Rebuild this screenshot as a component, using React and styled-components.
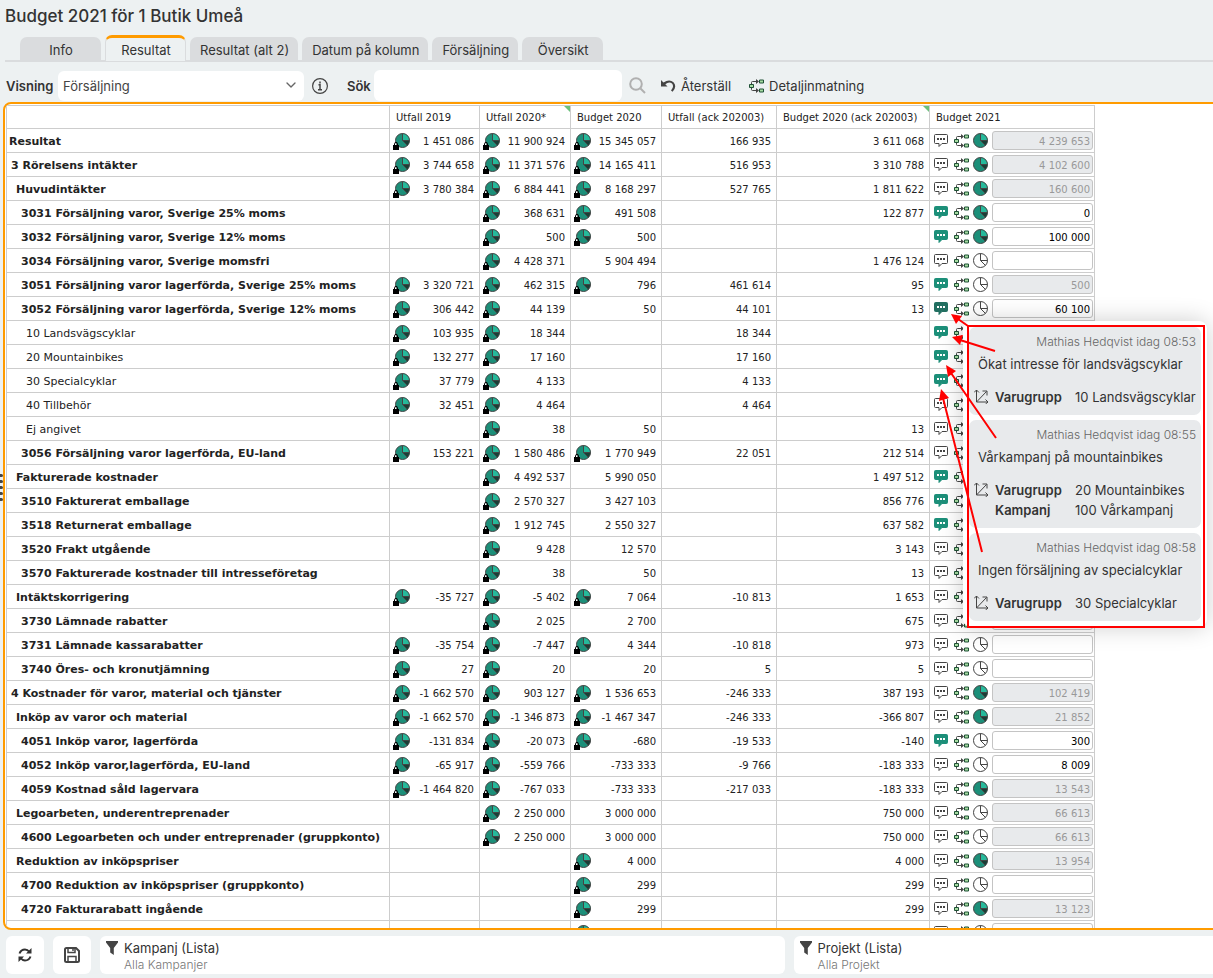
import styled, { createGlobalStyle, css } from 'styled-components'
import { ChevronDown } from 'lucide-react'

const colors = {
  page: '#edf1f2',
  orange: '#ff9b00',
  tab: '#dadcde',
  line: '#cdcdcd',
  text: '#333333',
  muted: '#777777',
  card: '#e8eaec',
  green: '#1c8f79',
}

const ui = '"Inter", "Liberation Sans", sans-serif'
const data = '"DejaVu Sans", Verdana, sans-serif'

const GlobalStyle = createGlobalStyle`
  * { box-sizing: border-box; }
  body {
    margin: 0;
    background: ${colors.page};
    color: ${colors.text};
    font: 13px/20px ${ui};
    overflow: hidden;
  }
`

const Page = styled.div`
  position: relative;
  display: flex;
  flex-direction: column;
  height: 100vh;
  overflow: hidden;
`

const Title = styled.h1`
  margin: 0;
  padding: 4px 5px 7px;
  font-size: 17px;
  line-height: 24px;
  font-weight: 500;
`

const Tabs = styled.nav`
  display: flex;
  align-items: flex-end;
  gap: 4px;
  height: 27px;
  margin-left: 5px;
  padding-left: 15px;
  border-bottom: 2px solid ${colors.tab};
`

const Tab = styled.a`
  height: 23px;
  min-width: 81px;
  padding: 2px 9px 0 10px;
  border-radius: 7px 7px 0 0;
  background: ${colors.tab};
  color: ${colors.text};
  text-align: center;
  text-decoration: none;
  line-height: 22px;
  ${p => p.$active && css`
    height: 27px;
    margin-bottom: -2px;
    padding-top: 1px;
    border: 1px solid ${colors.tab};
    border-top: 3px solid ${colors.orange};
    background: ${colors.page};
  `}
`

const Toolbar = styled.div`
  display: flex;
  align-items: center;
  height: 40px;
  padding: 7px 6px 0;
`

const FieldLabel = styled.label`
  font-weight: 600;
  width: ${p => p.$width}px;
`

const SelectBox = styled.div`
  position: relative;
  width: 246px;
  margin-right: 8px;
  svg {
    position: absolute;
    right: 5px;
    top: 6px;
    pointer-events: none;
  }
`

const Select = styled.select`
  appearance: none;
  width: 100%;
  height: 30px;
  padding: 0 5px;
  border: 0;
  border-radius: 6px;
  background: white;
  color: #444;
  font: inherit;
`

const SearchInput = styled.input`
  width: 248px;
  height: 31px;
  margin-right: 7px;
  border: 0;
  border-radius: 6px;
  background: white;
  font: inherit;
`

const PlainButton = styled.button`
  display: flex;
  align-items: center;
  gap: 5px;
  padding: 0;
  border: 0;
  background: none;
  color: inherit;
  font: inherit;
  margin-right: ${p => p.$gap || 0}px;
`

const Panel = styled.main`
  flex: 1;
  min-height: 0;
  margin: 0 -8px 0 3px;
  padding: 1px;
  border: 2px solid ${colors.orange};
  border-radius: 8px;
  background: white;
  overflow: hidden;
`

const Table = styled.table`
  width: 1089px;
  table-layout: fixed;
  border-collapse: separate;
  border-spacing: 0;
  border-top: 1px solid ${colors.line};
  border-left: 1px solid ${colors.line};
  font: 10px/20px ${data};
  color: #222;
`

const Head = styled.th`
  position: relative;
  width: ${p => p.$width}px;
  height: 23px;
  padding: 2px 6px 0;
  border: solid ${colors.line};
  border-width: 0 1px 1px 0;
  font-weight: 400;
  text-align: left;
  white-space: nowrap;
  ${p => p.$marked && css`
    &::after {
      content: '';
      position: absolute;
      top: 0;
      right: 0;
      border: 3px solid transparent;
      border-top-color: #6cc07c;
      border-right-color: #6cc07c;
    }
  `}
`

const Name = styled.th`
  height: 24px;
  padding: 3px 2px 0 ${p => p.$indent}px;
  border: solid ${colors.line};
  border-width: 0 1px 1px 0;
  font-size: 11px;
  font-weight: ${p => (p.$bold ? 700 : 400)};
  text-align: left;
  white-space: nowrap;
`

const Cell = styled.td`
  height: 24px;
  padding: 0 ${p => (p.$edit ? 1 : 5)}px 0 ${p => (p.$edit ? 4 : 3)}px;
  border: solid ${colors.line};
  border-width: 0 1px 1px 0;
`

const Value = styled.div`
  display: flex;
  align-items: center;
  justify-content: space-between;
  height: 23px;
  span { margin-left: auto; padding-top: 2px; }
`

const EditLine = styled.div`
  display: flex;
  align-items: center;
  gap: 4px;
  height: 23px;
`

const Amount = styled.input`
  flex: 1;
  min-width: 0;
  height: 19px;
  padding: 2px 2px 0;
  border: 1px solid #c4c4c4;
  border-radius: 3px;
  background: white;
  color: black;
  font: 10px/16px ${data};
  text-align: right;
  &:disabled {
    background: ${colors.card};
    color: #999;
  }
`

const Footer = styled.footer`
  display: flex;
  gap: 9px;
  padding: 6px 6px 4px;
`

const SquareButton = styled.button`
  display: flex;
  align-items: center;
  justify-content: center;
  flex: none;
  width: 38px;
  height: 38px;
  padding: 0;
  border: 0;
  border-radius: 6px;
  background: white;
`

const Filter = styled.button`
  display: flex;
  gap: 6px;
  flex: 0 0 57%;
  height: 38px;
  padding: 3px 6px;
  border: 0;
  border-radius: 6px;
  background: white;
  color: ${colors.text};
  font: 13px/18px ${ui};
  text-align: left;
  svg { margin-top: 2px; }
  small {
    display: block;
    font-size: 12px;
    line-height: 15px;
    font-weight: 300;
    color: ${colors.muted};
  }
`

const Handle = styled.div`
  position: absolute;
  left: -2px;
  top: 474px;
  display: grid;
  gap: 3px;
  i {
    width: 5px;
    height: 3px;
    border-radius: 2px;
    background: #444;
  }
`

const Popover = styled.aside`
  position: absolute;
  left: 963px;
  top: 321px;
  width: 244px;
  display: grid;
  gap: 5px;
  padding: 6px;
  border-radius: 8px;
  background: white;
  box-shadow: 0 0 24px rgba(0, 0, 0, 0.2);
`

const Card = styled.article`
  padding: 5px 5px 8px;
  border-radius: 7px;
  background: ${colors.card};
`

const Author = styled.div`
  font-size: 12px;
  font-weight: 300;
  color: #666;
  text-align: right;
`

const Message = styled.p`
  margin: 2px 4px 13px;
  white-space: nowrap;
`

const Dimensions = styled.dl`
  display: grid;
  grid-template-columns: 21px 80px 1fr;
  margin: 0;
  svg { margin-top: 2px; }
  dt { grid-column: 2; font-weight: 600; }
  dd { margin: 0; white-space: nowrap; }
`

const Markup = styled.svg`
  position: absolute;
  left: 930px;
  top: 305px;
  pointer-events: none;
`

const Pie = ({ filled, locked }) => (
  <svg width={locked ? 18 : 15} height={locked ? 18 : 15} viewBox={locked ? '-2 -1 18 18' : '0 0 15 15'}>
    <circle cx="7.5" cy="7.5" r="7" fill={filled ? colors.green : '#fff'} />
    {filled && <path d="M7.5 7.5V.5a7 7 0 0 1 7 7z" fill="#26b99b" />}
    {filled && <path d="M7.5 7.5h7a7 7 0 0 1-2 5z" fill="#173f36" />}
    <path d="M7.5 .5V7.5H14.5M7.5 7.5L12.5 12.5" fill="none" stroke="#444" />
    <circle cx="7.5" cy="7.5" r="7" fill="none" stroke="#444" />
    {locked && <path d="M-2 12h6v5h-6z" />}
    {locked && <path d="M-.5 12.5v-2q0-1 1.5-1t1.5 1v2" fill="none" stroke="#000" />}
  </svg>
)

const Comment = ({ state }) => {
  const fill = { on: colors.green, hover: '#226f61' }[state]
  return (
    <svg width="14" height="13" viewBox="0 0 14 13">
      <path
        d="M1.5.5h11q1 0 1 1v7q0 1-1 1H8L5 12.500V9.500H1.500q-1 0-1-1v-7q0-1 1-1z"
        fill={fill || '#fff'}
        stroke={fill || '#444'}
      />
      <path d="M3 4h2v2H3zM6 4h2v2H6zM9 4h2v2H9z" fill={fill ? '#fff' : '#444'} />
    </svg>
  )
}

const Flow = () => (
  <svg width="15" height="14" viewBox="0 0 15 14">
    <path d="M2.5 5V3.5q0-1 1-1H8M2.500 9v1.500q0 1 1 1H8" fill="none" stroke="#444" />
    <path d="M7 0v5l3-2.500zM7 9v5l3-2.500z" fill="#444" />
    <path d="M.5 5.500h4v3h-4zM10.500 1h4v3h-4zM10.500 10h4v3h-4z" fill="#a5dba0" stroke="#1f5136" />
  </svg>
)

const Axes = () => (
  <svg width="15" height="15" viewBox="0 0 15 15" fill="none" stroke="#444">
    <path d="M2.500 1v12H14M0 3.500L2.500 1 5 3.500M11.500 10.500L14 13l-2.500 2M2.500 13L12.500 2.500M8.500 2h4.500v4.500" />
  </svg>
)

const Info = () => (
  <svg width="16" height="16" viewBox="0 0 16 16" fill="none" stroke="#444">
    <circle cx="8" cy="8" r="7.400" strokeWidth="1.200" />
    <path d="M8 3.500v2M6.500 6.800H8v4.700M6 11.700h4" strokeWidth="1.500" />
  </svg>
)

const SearchIcon = () => (
  <svg width="17" height="17" viewBox="0 0 17 17" fill="none" stroke="#b0b0b0" strokeWidth="2">
    <circle cx="7" cy="7" r="5.800" />
    <path d="M11.500 11.500L16 16" />
  </svg>
)

const Undo = () => (
  <svg width="15" height="13" viewBox="0 0 15 13">
    <path d="M0 1v6.500h6.500L4.300 5.300Q8 2 11 4.500q2.500 3-1 7l1.600 1.300q4.800-5.300.9-9.500Q8.500-.5 2.500 3.500z" fill="#444" />
  </svg>
)

const Refresh = () => (
  <svg width="14" height="14" viewBox="0 0 14 14" fill="none" stroke="#333" strokeWidth="2">
    <path d="M1.500 5.500Q3 1.500 7 1.500q2.500 0 4.500 2.500M12.500 8.500Q11 12.500 7 12.500q-2.500 0-4.500-2.500" />
    <path d="M13.500 0v5.500H8zM.5 14V8.500H6z" fill="#333" stroke="none" />
  </svg>
)

const Save = () => (
  <svg width="16" height="16" viewBox="0 0 16 16" fill="none" stroke="#444" strokeWidth="2">
    <path d="M2.500 1h9.500l3 3v9.500q0 1.500-1.500 1.500h-11Q1 15 1 13.500v-11Q1 1 2.500 1z" />
    <path d="M4 1v4.500h7V1M4 15V9.500h8V15M9 2v2" strokeWidth="1.500" />
  </svg>
)

const Funnel = () => (
  <svg width="12" height="14" viewBox="0 0 12 14">
    <path d="M0 0h12v1.500L7.800 7v7L4.200 11.500V7L0 1.500z" fill="#444" />
  </svg>
)

const tabs = ['Info', 'Resultat', 'Resultat (alt 2)', 'Datum på kolumn', 'Försäljning', 'Översikt']

const columns = [
  { name: '', width: 383 },
  { name: 'Utfall 2019', width: 90 },
  { name: 'Utfall 2020*', width: 91, marked: true },
  { name: 'Budget 2020', width: 91 },
  { name: 'Utfall (ack 202003)', width: 115 },
  { name: 'Budget 2020 (ack 202003)', width: 153, marked: true },
  { name: 'Budget 2021', width: 165 },
]

// level, name, values (* = locked pie), comment, pie filled, amount, editable
const rows = [
  [0, 'Resultat', ['*1 451 086', '*11 900 924', '*15 345 057', '166 935', '3 611 068'], '', 1, '4 239 653', 0],
  [1, '3 Rörelsens intäkter', ['*3 744 658', '*11 371 576', '*14 165 411', '516 953', '3 310 788'], '', 1, '4 102 600', 0],
  [2, 'Huvudintäkter', ['*3 780 384', '*6 884 441', '*8 168 297', '527 765', '1 811 622'], '', 1, '160 600', 0],
  [3, '3031 Försäljning varor, Sverige 25% moms', ['', '*368 631', '*491 508', '', '122 877'], 'on', 1, '0', 1],
  [3, '3032 Försäljning varor, Sverige 12% moms', ['', '*500', '*500', '', ''], 'on', 1, '100 000', 1],
  [3, '3034 Försäljning varor, Sverige momsfri', ['', '*4 428 371', '5 904 494', '', '1 476 124'], '', 0, '', 1],
  [3, '3051 Försäljning varor lagerförda, Sverige 25% moms', ['*3 320 721', '*462 315', '*796', '461 614', '95'], 'on', 0, '500', 0],
  [3, '3052 Försäljning varor lagerförda, Sverige 12% moms', ['*306 442', '*44 139', '50', '44 101', '13'], 'hover', 0, '60 100', 1],
  [4, '10 Landsvägscyklar', ['*103 935', '*18 344', '', '18 344', ''], 'on', 0, '', 1],
  [4, '20 Mountainbikes', ['*132 277', '*17 160', '', '17 160', ''], 'on', 0, '', 1],
  [4, '30 Specialcyklar', ['*37 779', '*4 133', '', '4 133', ''], 'on', 0, '', 1],
  [4, '40 Tillbehör', ['*32 451', '*4 464', '', '4 464', ''], '', 0, '', 1],
  [4, 'Ej angivet', ['', '*38', '50', '', '13'], '', 0, '', 1],
  [3, '3056 Försäljning varor lagerförda, EU-land', ['*153 221', '*1 580 486', '*1 770 949', '22 051', '212 514'], '', 0, '', 1],
  [2, 'Fakturerade kostnader', ['', '*4 492 537', '5 990 050', '', '1 497 512'], 'on', 0, '', 0],
  [3, '3510 Fakturerat emballage', ['', '*2 570 327', '3 427 103', '', '856 776'], 'on', 0, '', 1],
  [3, '3518 Returnerat emballage', ['', '*1 912 745', '2 550 327', '', '637 582'], 'on', 0, '', 1],
  [3, '3520 Frakt utgående', ['', '*9 428', '12 570', '', '3 143'], '', 0, '', 1],
  [3, '3570 Fakturerade kostnader till intresseföretag', ['', '*38', '50', '', '13'], '', 0, '', 1],
  [2, 'Intäktskorrigering', ['*-35 727', '*-5 402', '*7 064', '-10 813', '1 653'], '', 0, '', 0],
  [3, '3730 Lämnade rabatter', ['', '*2 025', '2 700', '', '675'], '', 0, '', 1],
  [3, '3731 Lämnade kassarabatter', ['*-35 754', '*-7 447', '*4 344', '-10 818', '973'], '', 0, '', 1],
  [3, '3740 Öres- och kronutjämning', ['*27', '*20', '20', '5', '5'], '', 0, '', 1],
  [1, '4 Kostnader för varor, material och tjänster', ['*-1 662 570', '*903 127', '*1 536 653', '-246 333', '387 193'], '', 1, '102 419', 0],
  [2, 'Inköp av varor och material', ['*-1 662 570', '*-1 346 873', '*-1 467 347', '-246 333', '-366 807'], '', 1, '21 852', 0],
  [3, '4051 Inköp varor, lagerförda', ['*-131 834', '*-20 073', '*-680', '-19 533', '-140'], 'on', 0, '300', 1],
  [3, '4052 Inköp varor,lagerförda, EU-land', ['*-65 917', '*-559 766', '-733 333', '-9 766', '-183 333'], '', 0, '8 009', 1],
  [3, '4059 Kostnad såld lagervara', ['*-1 464 820', '*-767 033', '-733 333', '-217 033', '-183 333'], '', 1, '13 543', 0],
  [2, 'Legoarbeten, underentreprenader', ['', '*2 250 000', '3 000 000', '', '750 000'], '', 0, '66 613', 0],
  [3, '4600 Legoarbeten och under entreprenader (gruppkonto)', ['', '*2 250 000', '3 000 000', '', '750 000'], '', 0, '66 613', 0],
  [2, 'Reduktion av inköpspriser', ['', '', '*4 000', '', '4 000'], '', 1, '13 954', 0],
  [3, '4700 Reduktion av inköpspriser (gruppkonto)', ['', '', '*299', '', '299'], '', 0, '', 1],
  [3, '4720 Fakturarabatt ingående', ['', '', '*299', '', '299'], '', 1, '13 123', 0],
  [3, '', ['', '', '*', '', ''], '', 0, '', 1],
]

const indents = [2, 4, 9, 14, 19]

const comments = [
  { time: '08:53', text: 'Ökat intresse för landsvägscyklar', dims: [['Varugrupp', '10 Landsvägscyklar']] },
  { time: '08:55', text: 'Vårkampanj på mountainbikes', dims: [['Varugrupp', '20 Mountainbikes'], ['Kampanj', '100 Vårkampanj']] },
  { time: '08:58', text: 'Ingen försäljning av specialcyklar', dims: [['Varugrupp', '30 Specialcyklar']] },
]

const BudgetRow = ({ row: [level, name, values, comment, filled, amount, editable] }) => (
  <tr>
    <Name scope="row" $indent={indents[level]} $bold={level < 4}>{name}</Name>
    {values.map((v, i) => (
      <Cell key={i}>
        <Value>
          {v[0] === '*' && <Pie filled locked />}
          <span>{v.replace('*', '')}</span>
        </Value>
      </Cell>
    ))}
    <Cell $edit>
      <EditLine>
        <PlainButton $gap={2} aria-label="Kommentar"><Comment state={comment} /></PlainButton>
        <PlainButton aria-label="Detaljinmatning"><Flow /></PlainButton>
        <Pie filled={filled} />
        <Amount aria-label={`Budget 2021 ${name}`} defaultValue={amount} disabled={!editable} />
      </EditLine>
    </Cell>
  </tr>
)

const CommentCard = ({ time, text, dims }) => (
  <Card>
    <Author>Mathias Hedqvist idag {time}</Author>
    <Message>{text}</Message>
    <Dimensions>
      <Axes />
      {dims.map(([k, v]) => [<dt key={k}>{k}</dt>, <dd key={v}>{v}</dd>])}
    </Dimensions>
  </Card>
)

const Arrows = () => (
  <Markup width="280" height="330" viewBox="930 305 280 330" fill="none" stroke="#ff0000" strokeWidth="2">
    <rect x="968" y="326" width="236" height="301" />
    <path d="M968 326L958 319M995 351L960 340M996 438L951 373M982 552L943 398" />
    <g fill="#ff0000" stroke="none">
      <path d="M951 314L962 316L956 324z" />
      <path d="M952 337L963 335L960 345z" />
      <path d="M946 365L956 371L948 377z" />
      <path d="M941 389L949 398L939 401z" />
    </g>
  </Markup>
)

export default function App() {
  return (
    <Page>
      <GlobalStyle />
      <Title>Budget 2021 för 1 Butik Umeå</Title>
      <Tabs>
        {tabs.map(t => <Tab key={t} href="#" $active={t === 'Resultat'}>{t}</Tab>)}
      </Tabs>
      <Toolbar>
        <FieldLabel htmlFor="view" $width={52}>Visning</FieldLabel>
        <SelectBox>
          <Select id="view"><option>Försäljning</option></Select>
          <ChevronDown size={16} color="#666" />
        </SelectBox>
        <PlainButton $gap={19} aria-label="Info"><Info /></PlainButton>
        <FieldLabel htmlFor="search" $width={27}>Sök</FieldLabel>
        <SearchInput id="search" />
        <PlainButton $gap={15} aria-label="Sök"><SearchIcon /></PlainButton>
        <PlainButton $gap={18}><Undo />Återställ</PlainButton>
        <PlainButton><Flow />Detaljinmatning</PlainButton>
      </Toolbar>
      <Panel>
        <Table>
          <thead>
            <tr>{columns.map(c => <Head key={c.name} $width={c.width} $marked={c.marked}>{c.name}</Head>)}</tr>
          </thead>
          <tbody>
            {rows.map((row, i) => <BudgetRow key={i} row={row} />)}
          </tbody>
        </Table>
      </Panel>
      <Footer>
        <SquareButton aria-label="Uppdatera"><Refresh /></SquareButton>
        <SquareButton aria-label="Spara"><Save /></SquareButton>
        <Filter><Funnel /><span>Kampanj (Lista)<small>Alla Kampanjer</small></span></Filter>
        <Filter><Funnel /><span>Projekt (Lista)<small>Alla Projekt</small></span></Filter>
      </Footer>
      <Handle><i /><i /><i /><i /><i /></Handle>
      <Popover>
        {comments.map(c => <CommentCard key={c.time} {...c} />)}
      </Popover>
      <Arrows />
    </Page>
  )
}
